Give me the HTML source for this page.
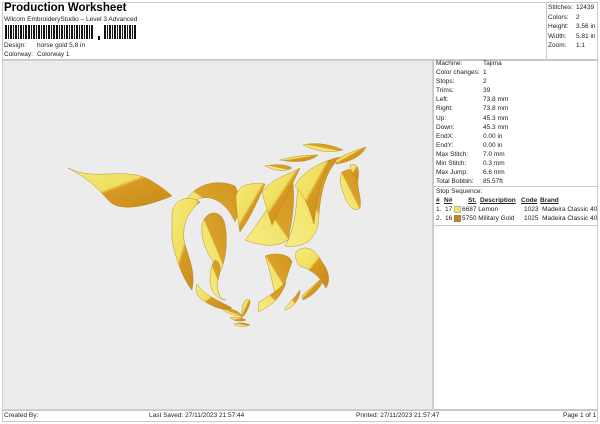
<!DOCTYPE html>
<html><head><meta charset="utf-8"><style>
*{margin:0;padding:0;box-sizing:border-box}
body{width:600px;height:424px;background:#fff;font-family:"Liberation Sans",sans-serif;color:#222;position:relative;overflow:hidden;font-size:6.5px}
.a{position:absolute;white-space:nowrap}
.box{position:absolute;border:1px solid #c8c8c8}
</style></head><body>
<div class="box" style="left:2px;top:2px;width:545px;height:58px"></div>
<div class="box" style="left:546px;top:2px;width:52px;height:58px"></div>
<div class="a" style="left:4px;top:2px;font-size:11.5px;font-weight:bold;color:#000">Production Worksheet</div>
<div class="a" style="left:4px;top:16px">Wilcom EmbroideryStudio – Level 3 Advanced</div>
<svg class="a" style="left:5px;top:25px" width="132" height="15">
<g fill="#111">
<rect x="0" width="2" height="14"/><rect x="3" width="1" height="14"/><rect x="5" width="2" height="14"/><rect x="8" width="1" height="14"/><rect x="10" width="2" height="14"/><rect x="13" width="1" height="14"/><rect x="15" width="2" height="14"/><rect x="18" width="1" height="14"/><rect x="20" width="2" height="14"/><rect x="23" width="2" height="14"/><rect x="26" width="1" height="14"/><rect x="28" width="2" height="14"/><rect x="31" width="1" height="14"/><rect x="33" width="2" height="14"/><rect x="36" width="1" height="14"/><rect x="38" width="2" height="14"/><rect x="41" width="1" height="14"/><rect x="43" width="2" height="14"/><rect x="46" width="1" height="14"/><rect x="48" width="2" height="14"/><rect x="51" width="2" height="14"/><rect x="54" width="1" height="14"/><rect x="56" width="2" height="14"/><rect x="59" width="1" height="14"/><rect x="61" width="2" height="14"/><rect x="64" width="1" height="14"/><rect x="66" width="2" height="14"/><rect x="69" width="1" height="14"/><rect x="71" width="2" height="14"/><rect x="74" width="1" height="14"/><rect x="76" width="2" height="14"/><rect x="79" width="1" height="14"/><rect x="81" width="2" height="14"/><rect x="84" width="1" height="14"/><rect x="86" width="2" height="14"/>
<rect x="93" y="11" width="2" height="4"/>
<rect x="99" width="2" height="14"/><rect x="102" width="1" height="14"/><rect x="104" width="2" height="14"/><rect x="107" width="1" height="14"/><rect x="109" width="2" height="14"/><rect x="112" width="1" height="14"/><rect x="114" width="2" height="14"/><rect x="117" width="1" height="14"/><rect x="119" width="2" height="14"/><rect x="122" width="1" height="14"/><rect x="124" width="2" height="14"/><rect x="127" width="1" height="14"/><rect x="129" width="2" height="14"/>
</g></svg>
<div class="a" style="left:4px;top:42px">Design:</div><div class="a" style="left:37px;top:42px">horse gold 5,8 in</div>
<div class="a" style="left:4px;top:51px">Colorway:</div><div class="a" style="left:37px;top:51px">Colorway 1</div>
<div class="a" style="left:548px;top:3px;line-height:9.6px">Stitches:<br>Colors:<br>Height:<br>Width:<br>Zoom:</div>
<div class="a" style="left:576px;top:3px;line-height:9.6px">12439<br>2<br>3.56 in<br>5.81 in<br>1:1</div>

<div class="a" style="left:2px;top:60px;width:431px;height:350px;background:#ececec;border:1px solid #d0d0d0"></div>
<div class="box" style="left:433px;top:60px;width:165px;height:350px"></div>
<div class="a" style="left:433px;top:186px;width:165px;border-top:1px solid #c8c8c8"></div>
<div class="a" style="left:433px;top:225px;width:165px;border-top:1px solid #c8c8c8"></div>
<div class="a" style="left:436px;top:59px;line-height:9.1px">Machine:<br>Color changes:<br>Stops:<br>Trims:<br>Left:<br>Right:<br>Up:<br>Down:<br>EndX:<br>EndY:<br>Max Stitch:<br>Min Stitch:<br>Max Jump:<br>Total Bobbin:</div>
<div class="a" style="left:483px;top:59px;line-height:9.1px">Tajima<br>1<br>2<br>39<br>73.8 mm<br>73.8 mm<br>45.3 mm<br>45.3 mm<br>0.00 in<br>0.00 in<br>7.0 mm<br>0.3 mm<br>6.6 mm<br>85.57ft</div>
<div class="a" style="left:436px;top:188px">Stop Sequence:</div>
<div class="a" style="left:436px;top:197px;font-weight:bold;text-decoration:underline">#</div>
<div class="a" style="left:444px;top:197px;font-weight:bold;text-decoration:underline">N#</div>
<div class="a" style="left:468px;top:197px;font-weight:bold;text-decoration:underline">St.</div>
<div class="a" style="left:480px;top:197px;font-weight:bold;text-decoration:underline">Description</div>
<div class="a" style="left:521px;top:197px;font-weight:bold;text-decoration:underline">Code</div>
<div class="a" style="left:540px;top:197px;font-weight:bold;text-decoration:underline">Brand</div>
<div class="a" style="left:436px;top:206px">1.&nbsp; 17</div><div class="a" style="left:454px;top:206px;width:7px;height:7px;background:#f3e65a;border:1px solid #bba"></div><div class="a" style="left:462px;top:206px">6687 Lemon</div><div class="a" style="left:524px;top:206px">1023&nbsp; Madeira Classic 40</div>
<div class="a" style="left:436px;top:215px">2.&nbsp; 16</div><div class="a" style="left:454px;top:215px;width:7px;height:7px;background:#c88418;border:1px solid #985"></div><div class="a" style="left:462px;top:215px">5750 Military Gold</div><div class="a" style="left:524px;top:215px">1025&nbsp; Madeira Classic 40</div>

<svg class="a" style="left:0;top:0" width="433" height="410">
<defs>
<linearGradient id="g1" x1="0" y1="0" x2="1" y2="1"><stop offset="0" stop-color="#f4ec78"/><stop offset=".45" stop-color="#f0df60"/><stop offset=".5" stop-color="#d69a22"/><stop offset="1" stop-color="#c88a1c"/></linearGradient>
<linearGradient id="g2" x1="1" y1="0" x2="0" y2="1"><stop offset="0" stop-color="#d09420"/><stop offset=".5" stop-color="#d9a22a"/><stop offset=".52" stop-color="#f2e36c"/><stop offset="1" stop-color="#f6ee84"/></linearGradient>
</defs>
<g stroke="#b07a14" stroke-width=".4">
<path fill="url(#g1)" d="M68,168 C95,182 125,166 150,180 C160,186 168,192 172,196 C150,205 120,214 108,200 C98,188 85,176 68,168Z"/>
<path fill="url(#g2)" d="M182,208 C188,190 210,176 235,186 C240,194 240,212 235,222 C228,205 212,192 196,200 C188,206 185,214 182,208Z"/>
<path fill="url(#g1)" d="M172,212 C175,198 190,195 200,202 C190,210 182,222 184,240 C188,258 196,270 192,290 C185,282 176,262 172,240Z"/>
<path fill="url(#g2)" d="M202,225 C205,210 222,208 225,225 C228,240 226,260 220,272 C212,260 200,245 202,225Z"/>
<path fill="url(#g1)" d="M236,196 C238,186 248,182 265,184 C258,200 252,215 240,232 C238,220 236,208 236,196Z"/>
<path fill="url(#g2)" d="M245,240 C258,225 268,205 292,176 C296,200 292,222 288,240 C275,248 262,246 245,240Z"/>
<path fill="url(#g1)" d="M262,192 C270,180 285,176 300,168 C292,185 282,205 272,225 C268,212 264,200 262,192Z"/>
<path fill="url(#g2)" d="M285,246 C296,228 296,205 298,185 C310,168 325,160 340,157 C322,175 320,200 318,225 C314,240 305,248 285,246Z"/>
<path fill="url(#g1)" d="M295,186 C300,175 315,165 330,160 C320,180 316,205 314,224 C310,210 305,196 295,186Z"/>
<path fill="url(#g2)" d="M303,145 C315,142 330,144 343,150 C330,153 318,152 303,145Z"/>
<path fill="url(#g1)" d="M280,160 C295,156 305,155 318,155 C310,162 295,163 280,160Z"/>
<path fill="url(#g2)" d="M265,166 C275,164 285,164 292,168 C285,172 275,171 265,166Z"/>
<path fill="url(#g1)" d="M336,160 C348,152 358,150 366,147 C362,156 350,162 336,164Z"/>
<path fill="url(#g2)" d="M342,172 C352,166 360,172 358,180 C357,190 362,198 360,208 C355,212 350,208 346,200 C342,190 338,180 342,172Z"/>
<path fill="url(#g1)" d="M350,165 C356,162 360,168 358,178 C354,176 350,170 350,165Z"/>
<path fill="url(#g2)" d="M265,256 C275,252 290,254 292,262 C286,278 284,290 276,298 C272,282 270,270 265,256Z"/>
<path fill="url(#g1)" d="M296,252 C305,244 315,248 322,262 C330,272 330,282 326,288 C320,278 316,272 300,266 C296,262 295,258 296,252Z"/>
<path fill="url(#g2)" d="M215,260 C220,262 222,268 218,280 C216,290 220,300 226,300 C220,300 210,294 210,280 C210,270 212,264 215,260Z"/>
<path fill="url(#g1)" d="M197,284 C205,296 218,300 232,308 C224,312 210,306 200,298 C196,294 195,290 197,284Z"/>
<path fill="url(#g2)" d="M259,302 C270,296 280,288 286,282 C282,296 272,306 258,312Z"/>
<path fill="url(#g1)" d="M244,302 C248,296 252,300 249,306 C247,312 244,316 241,318 C242,312 242,306 244,302Z"/>
<path fill="url(#g2)" d="M285,308 C292,300 296,296 300,290 C300,300 292,308 285,310Z"/>
<path fill="url(#g1)" d="M302,296 C310,288 318,282 325,275 C322,288 312,296 303,300Z"/>
<path fill="url(#g2)" d="M222,309 C230,308 238,310 242,316 C235,316 228,314 222,309Z"/>
<path fill="url(#g1)" d="M230,318 C236,316 242,318 246,320 C240,322 234,321 230,318Z"/>
<path fill="url(#g2)" d="M234,324 C240,322 246,323 250,325 C244,327 238,327 234,324Z"/>
</g></svg>

<div class="box" style="left:2px;top:410px;width:596px;height:12px"></div>
<div class="a" style="left:4px;top:412px">Created By:</div>
<div class="a" style="left:149px;top:412px">Last Saved: 27/11/2023 21:57:44</div>
<div class="a" style="left:356px;top:412px">Printed: 27/11/2023 21:57:47</div>
<div class="a" style="left:563px;top:412px">Page 1 of 1</div>
</body></html>
